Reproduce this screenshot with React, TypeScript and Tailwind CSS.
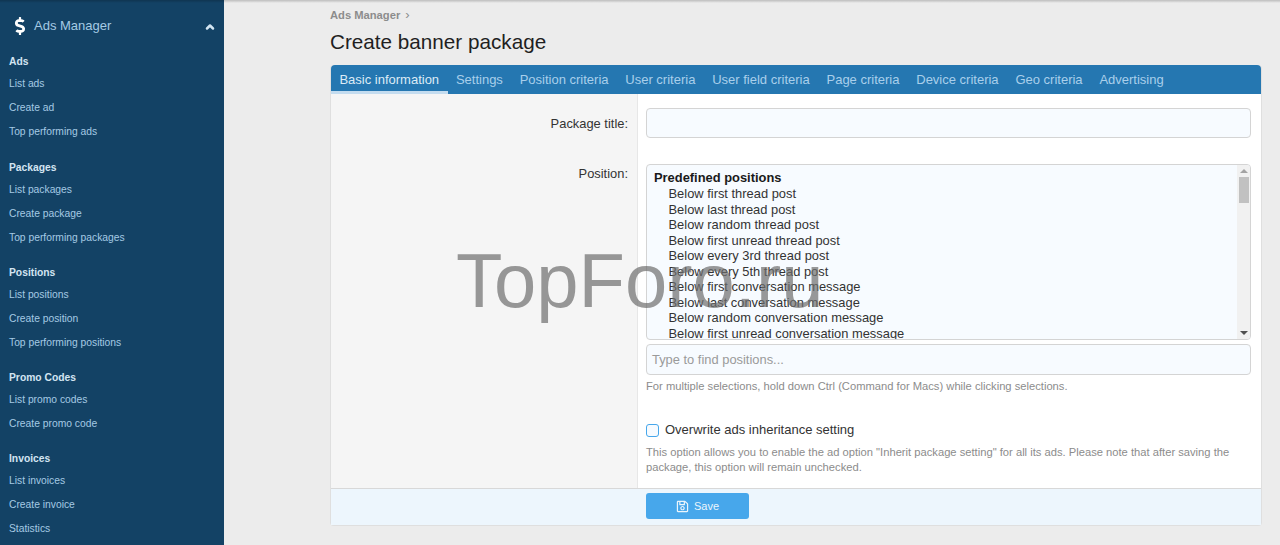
import { ChevronUp } from "lucide-react"
import { FaDollarSign, FaRegSave } from "react-icons/fa"

const sections = [
  { title: "Ads", links: ["List ads", "Create ad", "Top performing ads"] },
  { title: "Packages", links: ["List packages", "Create package", "Top performing packages"] },
  { title: "Positions", links: ["List positions", "Create position", "Top performing positions"] },
  { title: "Promo Codes", links: ["List promo codes", "Create promo code"] },
  { title: "Invoices", links: ["List invoices", "Create invoice", "Statistics"] },
]

const tabs = [
  "Basic information",
  "Settings",
  "Position criteria",
  "User criteria",
  "User field criteria",
  "Page criteria",
  "Device criteria",
  "Geo criteria",
  "Advertising",
]

const positions = [
  "Below first thread post",
  "Below last thread post",
  "Below random thread post",
  "Below first unread thread post",
  "Below every 3rd thread post",
  "Below every 5th thread post",
  "Below first conversation message",
  "Below last conversation message",
  "Below random conversation message",
  "Below first unread conversation message",
]

function Sidebar() {
  return (
    <aside className="w-[224px] shrink-0 bg-[#134265] text-[#a5cae4]">
      <div className="flex h-[52px] items-center pl-[13px] pr-[8px]">
        <FaDollarSign className="h-[18px] w-[14px] text-white" />
        <span className="ml-[7px] text-[13px]">Ads Manager</span>
        <ChevronUp className="mt-[2px] ml-auto h-[12px] w-[12px] text-[#d3e5f2]" strokeWidth={5} />
      </div>
      {sections.map((s) => (
        <div key={s.title} className="mb-[13.25px] pl-[9px]">
          <div className="flex h-[20px] items-center text-[10.3px] font-bold text-[#d3e5f2]">{s.title}</div>
          {s.links.map((l) => (
            <div key={l} className="flex h-[24px] items-center text-[10.3px] whitespace-nowrap">
              {l}
            </div>
          ))}
        </div>
      ))}
    </aside>
  )
}

function Tabs() {
  return (
    <div className="flex h-[29px] rounded-t-[4px] bg-[#2577b1] text-[13px] text-[#a9cfeb]">
      {tabs.map((t, i) => (
        <div
          key={t}
          className={
            i === 0
              ? "flex h-[29px] items-center border-b-[3px] border-[#c4dcef] px-[8.4px] pt-[3px] text-[#dcebf6]"
              : "flex h-[29px] items-center px-[8.4px]"
          }
        >
          {t}
        </div>
      ))}
    </div>
  )
}

function PositionList() {
  return (
    <div className="relative h-[176px] overflow-hidden rounded-[4px] border border-[#d4d4d4] bg-[#f7fbff] pt-[5px] pl-[7px] text-[12.9px] leading-[15.55px] text-[#333333]">
      <div className="mb-[0.5px] font-bold text-[#1a1a1a]">Predefined positions</div>
      {positions.map((p) => (
        <div key={p} className="pl-[14.5px] whitespace-nowrap">
          {p}
        </div>
      ))}
      <div className="absolute top-0 right-0 bottom-0 flex w-[13px] flex-col items-center bg-[#f1f1f1]">
        <div className="mt-[4px] h-0 w-0 border-x-[4px] border-b-[4px] border-x-transparent border-b-[#a3a3a3]" />
        <div className="mt-[4px] h-[26px] w-[10px] bg-[#c1c1c1]" />
        <div className="mt-auto mb-[4px] h-0 w-0 border-x-[4px] border-t-[4px] border-x-transparent border-t-[#505050]" />
      </div>
    </div>
  )
}

function BlockForm() {
  return (
    <div className="flex bg-white">
      <div className="w-[307px] shrink-0 border-r border-[#e7e7e7] bg-[#f5f5f5] pr-[9px] text-right text-[12.9px] text-[#333333]">
        <div className="pt-[22px] leading-[16px]">Package title:</div>
        <div className="pt-[34px] leading-[16px]">Position:</div>
      </div>
      <div className="h-[394px] flex-1 pt-[14px] pr-[10px] pl-[8px]">
        <div className="h-[30px] rounded-[4px] border border-[#d4d4d4] bg-[#f7fbff]" />
        <div className="mt-[26px]">
          <PositionList />
        </div>
        <div className="mt-[4px] flex h-[31px] items-center rounded-[4px] border border-[#d4d4d4] bg-[#f7fbff] pl-[5px] text-[12.9px] text-[#9a9a9a]">
          Type to find positions...
        </div>
        <p className="mt-[3px] text-[11.2px] leading-[16px] text-[#8c8c8c]">
          For multiple selections, hold down Ctrl (Command for Macs) while clicking selections.
        </p>
        <label className="mt-[28px] flex items-center text-[13px] leading-[16px] text-[#333333]">
          <span className="h-[13px] w-[13px] rounded-[3px] border border-[#47a7eb] bg-[#f7fbff]" />
          <span className="ml-[6px]">Overwrite ads inheritance setting</span>
        </label>
        <p className="mt-[7px] text-[11.2px] leading-[15px] text-[#8c8c8c]">
          This option allows you to enable the ad option "Inherit package setting" for all its ads. Please note that
          after saving the package, this option will remain unchecked.
        </p>
      </div>
    </div>
  )
}

export default function App() {
  return (
    <div
      className="relative flex h-[545px] w-[1280px] overflow-hidden bg-[#ececec] text-[#333333]"
      style={{ fontFamily: '"Liberation Sans", Arial, sans-serif' }}
    >
      <Sidebar />
      <main className="w-[1056px] pt-[8px] pl-[106px]">
        <div className="flex h-[14px] items-center text-[11.2px] font-bold text-[#8c8c8c]">
          Ads Manager <span className="ml-[5px] text-[13px] font-normal">›</span>
        </div>
        <h1 className="mt-[8px] text-[20.7px] leading-[24px] font-normal text-[#1f1f1f]">Create banner package</h1>
        <div className="mt-[11px] w-[932px] rounded-[4px] border border-t-0 border-[#dfdfdf]">
          <Tabs />
          <BlockForm />
          <div className="flex h-[37px] items-center border-t border-[#d8d8d8] bg-[#edf6fd] pb-[2px] pl-[315px]">
            <div className="flex h-[26px] w-[103px] items-center justify-center rounded-[3px] bg-[#47a7eb] text-[11px] text-[#ebf5fc]">
              <FaRegSave className="mr-[5px] h-[13px] w-[13px]" />
              Save
            </div>
          </div>
        </div>
      </main>
      <div className="absolute top-0 right-0 left-0 h-[3px] bg-gradient-to-b from-[#00000033] to-transparent" />
      <div className="pointer-events-none absolute top-[238px] left-[456px] text-[76px] leading-[86px] whitespace-nowrap text-[#6e6e6e]/70">
        TopForo.ru
      </div>
    </div>
  )
}
